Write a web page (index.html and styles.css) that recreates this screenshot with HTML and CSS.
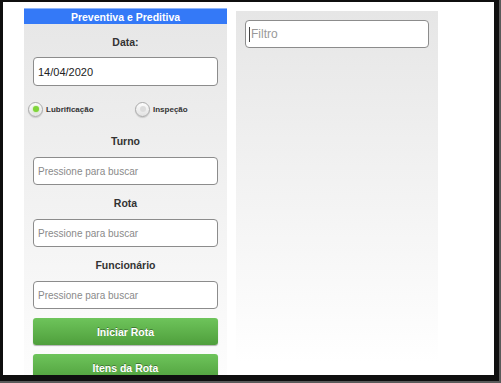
FILE: index.html
```html
<!DOCTYPE html>
<html lang="pt">
<head>
    <meta charset="UTF-8">
    <meta name="viewport" content="width=device-width, initial-scale=1.0">
    <title>Preventiva e Preditiva</title>
    <link rel="stylesheet" href="styles.css">
</head>
<body>
    <div class="bezel">
        <div class="screen">
            <div class="panel form-panel">
                <div class="panel-title">Preventiva e Preditiva</div>
                <div class="form-body">
                    <label class="field-label first" for="data">Data:</label>
                    <input class="field date-field" id="data" type="text" value="14/04/2020">

                    <div class="radio-row">
                        <label class="radio-option"><span class="radio checked"></span>Lubrificação</label>
                        <label class="radio-option"><span class="radio"></span>Inspeção</label>
                    </div>

                    <label class="field-label turno" for="turno">Turno</label>
                    <input class="field" id="turno" type="text" placeholder="Pressione para buscar">

                    <label class="field-label" for="rota">Rota</label>
                    <input class="field" id="rota" type="text" placeholder="Pressione para buscar">

                    <label class="field-label" for="funcionario">Funcionário</label>
                    <input class="field" id="funcionario" type="text" placeholder="Pressione para buscar">

                    <button class="btn-green" type="button">Iniciar Rota</button>
                    <button class="btn-green" type="button">Itens da Rota</button>
                </div>
            </div>

            <div class="panel list-panel">
                <div class="filter-box">
                    <span class="caret"></span>
                    <span class="filter-placeholder">Filtro</span>
                </div>
            </div>
        </div>
    </div>
</body>
</html>
```

FILE: styles.css
```css
html, body {
    margin: 0;
    padding: 0;
    background-color: #5a5a5a;
    font-family: "Liberation Sans", Arial, sans-serif;
}

.bezel {
    width: 499px;
    height: 381px;
    box-sizing: border-box;
    padding: 2px 5px 6px 3px;
    background-color: #0f0f0f;
}

.screen {
    display: flex;
    align-items: flex-start;
    gap: 9px;
    height: 373px;
    padding: 6px 0 0 21px;
    box-sizing: border-box;
    background-color: #fff;
    overflow: hidden;
}

.panel {
    background: linear-gradient(#e6e6e6, #fbfbfb 85%, #fff);
}

.form-panel {
    width: 203px;
    height: 400px;
    flex-shrink: 0;
}

.panel-title {
    height: 16px;
    line-height: 16px;
    background-color: #3479f7;
    border-top: 1px solid #8fb6fb;
    box-sizing: border-box;
    color: #fff;
    font-size: 10.5px;
    font-weight: bold;
    text-align: center;
}

.form-body {
    display: flex;
    flex-direction: column;
    padding: 0 9px;
}

.field-label {
    margin-top: 8px;
    line-height: 20px;
    font-size: 10.5px;
    font-weight: bold;
    color: #333;
    text-align: center;
}

.field-label.first {
    margin-top: 8px;
}

.field-label.turno {
    margin-top: 13px;
}

.field {
    width: 185px;
    height: 28px;
    margin: 6px 0 0 0;
    padding: 0 4px;
    border: 1px solid #8c8c8c;
    border-radius: 4px;
    box-sizing: border-box;
    background-color: #fff;
    font-family: "Liberation Sans", Arial, sans-serif;
    font-size: 10px;
    color: #222;
    outline: none;
}

.field::placeholder {
    color: #8a8a8a;
}

.date-field {
    height: 29px;
    margin-top: 5px;
    font-size: 11px;
}

.radio-row {
    display: grid;
    grid-template-columns: 107px auto;
    align-items: center;
    height: 18px;
    margin: 14px -9px 0 -9px;
    padding-left: 4px;
}

.radio-option {
    display: flex;
    align-items: center;
    gap: 3px;
    font-size: 8px;
    font-weight: bold;
    color: #333;
}

.radio {
    display: flex;
    align-items: center;
    justify-content: center;
    width: 15px;
    height: 15px;
    border: 1px solid #a9a9a9;
    border-radius: 50%;
    box-sizing: border-box;
    background: linear-gradient(#fdfdfd, #e2e2e2);
    box-shadow: 0 1px 1px rgba(0, 0, 0, 0.15);
}

.radio::after {
    content: "";
    width: 6px;
    height: 6px;
    border-radius: 50%;
    background-color: #dcdcdc;
}

.radio.checked::after {
    background-color: #7fd43a;
    box-shadow: 0 0 2px #a6e66f;
}

.btn-green {
    width: 185px;
    height: 27px;
    margin-top: 9px;
    padding: 0;
    border: none;
    border-radius: 3px;
    background: linear-gradient(#6ec45b, #4f9f3c);
    box-shadow: 0 1px 1px rgba(0, 0, 0, 0.3);
    color: #fff;
    font-family: "Liberation Sans", Arial, sans-serif;
    font-size: 10.5px;
    font-weight: bold;
    text-shadow: 0 -1px 0 rgba(0, 0, 0, 0.35);
    cursor: pointer;
}

.list-panel {
    width: 202px;
    height: 352px;
    margin-top: 3px;
    padding: 9px;
    box-sizing: border-box;
    flex-shrink: 0;
}

.filter-box {
    display: flex;
    align-items: center;
    width: 184px;
    height: 28px;
    padding-left: 3px;
    border: 1px solid #8c8c8c;
    border-radius: 4px;
    box-sizing: border-box;
    background-color: #fff;
}

.caret {
    width: 1px;
    height: 15px;
    margin-right: 1px;
    background-color: #444;
}

.filter-placeholder {
    font-size: 12px;
    color: #999;
}
```
